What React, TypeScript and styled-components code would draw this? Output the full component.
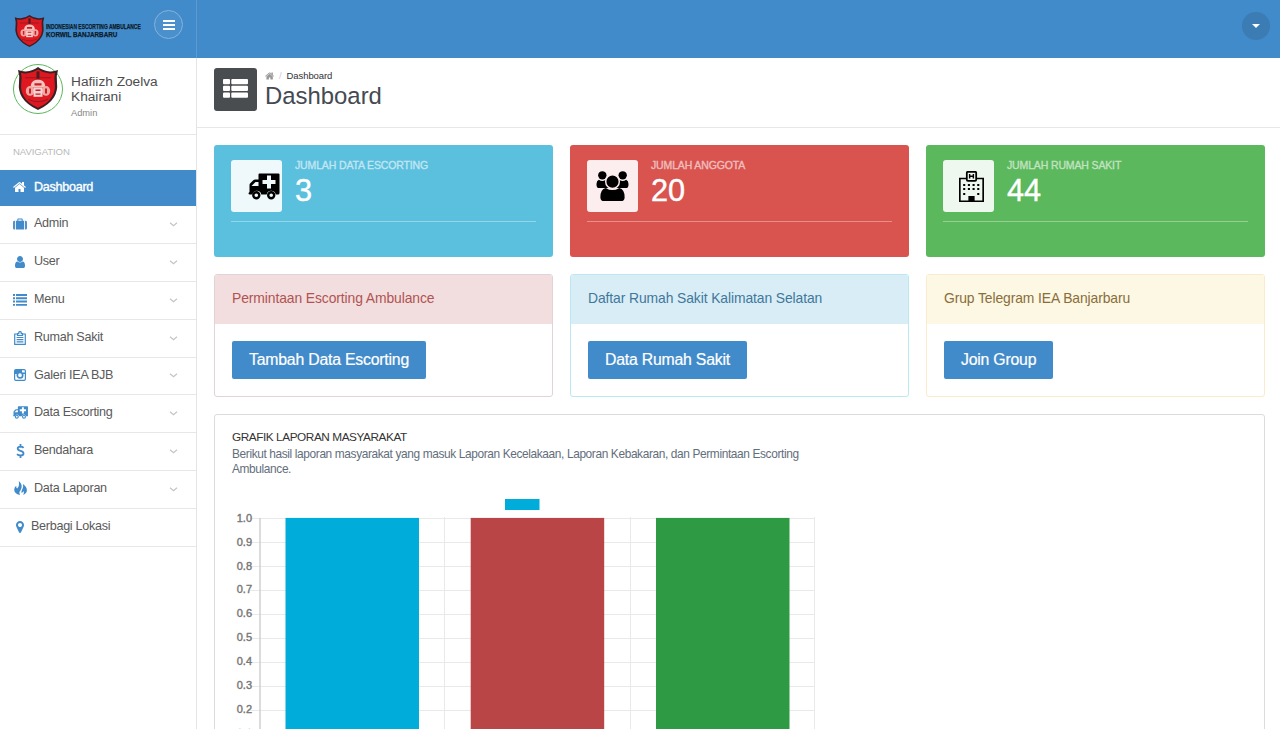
import React from "react";
import styled, { createGlobalStyle } from "styled-components";

const Global = createGlobalStyle`
  *{box-sizing:border-box}
  html,body,#root{margin:0;height:729px}
  body{font-family:"Liberation Sans",Arial,sans-serif;background:#fff;color:#555;overflow:hidden}
  svg{display:block;flex:none}
`;
const Page = styled.div`height:729px;overflow:hidden;`;
const TopBar = styled.header`height:58px;background:#428bca;display:flex;justify-content:space-between;`;
const Brand = styled.div`width:197px;border-right:1px solid #5b9bd1;display:flex;padding:11px 0 0 14px;`;
const BrandLogo = styled.div`margin-top:4px;`;
const BrandText = styled.div`
  width:97px;margin-left:1px;padding-top:12px;line-height:8px;font-weight:700;color:#0c1a28;white-space:nowrap;
  -webkit-text-stroke:.25px #0c1a28;
`;
const BrandLine = styled.div<{ $scale: number; $size: number }>`
  width:95px;font-size:${p => p.$size}px;transform:scaleX(${p => p.$scale});transform-origin:0 0;
`;
const RoundButton = styled.button`
  width:29px;height:29px;margin:-1px 0 0 11px;padding:0;border:1px solid #82b3de;border-radius:50%;
  background:#4a90cd;display:grid;place-items:center;
`;
const UserToggle = styled.button`
  width:28px;height:28px;margin:12px 10px 0 0;padding:0;border:0;border-radius:50%;background:#3b7cb4;display:grid;place-items:center;
`;
const Body = styled.div`display:flex;height:671px;`;
const Sidebar = styled.aside`width:197px;flex:none;border-right:1px solid #e4e4e4;`;
const Profile = styled.div`height:77px;border-bottom:1px solid #e7e7e7;display:flex;padding:6px 0 0 13px;`;
const Avatar = styled.div`
  width:50px;height:50px;border:1px solid #5cb85c;border-radius:50%;display:grid;place-items:center;padding-bottom:2px;
`;
const ProfileText = styled.div`margin:10px 0 0 8px;font-size:13.7px;line-height:15px;color:#4d4d4d;width:100px;`;
const Role = styled.div`font-size:9.3px;line-height:14px;color:#888;margin-top:2px;`;
const NavTitle = styled.div`height:35px;padding:12px 0 0 13px;font-size:9.6px;line-height:10px;color:#b9b9b9;letter-spacing:-.1px;`;
const NavItem = styled.a<{ $active?: boolean; $h: number }>`
  height:${p => p.$h}px;display:flex;align-items:center;padding:0 18px 2px 12px;
  font-size:12.6px;letter-spacing:-.29px;color:${p => (p.$active ? "#fff" : "#5a5a5a")};
  background:${p => (p.$active ? "#428bca" : "#fff")};
  border-bottom:${p => (p.$active ? "0" : "1px solid #e7e7e7")};
  ${p => p.$active && "-webkit-text-stroke:.35px #fff;"}
`;
const NavIcon = styled.span<{ $active?: boolean }>`width:16px;display:grid;place-items:center;color:${p => (p.$active ? "#fff" : "#428bca")};`;
const NavLabel = styled.span<{ $gap?: number }>`flex:1;margin-left:${p => p.$gap ?? 6}px;padding-bottom:1px;`;
const Main = styled.main`flex:1;min-width:0;`;
const PageHead = styled.div`height:70px;border-bottom:1px solid #e7e7e7;display:flex;padding:10px 0 0 17px;`;
const HeadIcon = styled.div`width:43px;height:43px;border-radius:3px;background:#4a4d50;display:grid;place-items:center;padding-bottom:2px;`;
const HeadText = styled.div`margin-left:8px;`;
const Crumbs = styled.div`display:flex;align-items:center;height:15px;font-size:9.5px;color:#333;gap:5px;letter-spacing:-.08px;`;
const CrumbHome = styled.span`color:#999;margin-right:-1px;`;
const Slash = styled.span`color:#ccc;`;
const Title = styled.h1`margin:0;font-size:23.9px;line-height:25px;font-weight:400;color:#444a52;`;
const Content = styled.div`padding:17px 15px 0 17px;`;
const Row = styled.div`display:grid;grid-template-columns:repeat(3,1fr);column-gap:17px;`;
const Stat = styled.section<{ $bg: string }>`height:112px;border-radius:3px;background:${p => p.$bg};padding:15px 17px 0;`;
const StatTop = styled.div`display:flex;height:62px;border-bottom:1px solid rgba(255,255,255,.35);`;
const StatIcon = styled.div<{ $shift?: number }>`
  width:51px;height:52px;border-radius:3px;background:rgba(255,255,255,.9);color:#000;display:flex;align-items:center;
  justify-content:center;padding-left:${p => p.$shift ?? 0}px;
`;
const StatText = styled.div`margin-left:13px;color:#fff;`;
const StatLabel = styled.div`font-size:10.5px;line-height:10px;letter-spacing:-.14px;opacity:.62;-webkit-text-stroke:.3px #fff;`;
const StatNumber = styled.div`font-size:30.7px;line-height:42px;-webkit-text-stroke:.4px #fff;`;
const Card = styled.section<{ $line: string }>`height:123px;margin-top:17px;border:1px solid ${p => p.$line};border-radius:3px;overflow:hidden;`;
const CardHead = styled.div<{ $bg: string; $fg: string }>`
  height:49px;padding:15px 17px;font-size:13.9px;letter-spacing:-.1px;line-height:16px;background:${p => p.$bg};color:${p => p.$fg};
`;
const Button = styled.button`
  height:38px;margin:17px 0 0 17px;padding:0 17px;border:0;border-radius:2px;background:#428bca;color:#fff;
  font:15.8px "Liberation Sans",Arial,sans-serif;letter-spacing:-.2px;-webkit-text-stroke:.2px #fff;white-space:nowrap;
`;
const ChartPanel = styled.section`height:400px;margin-top:17px;border:1px solid #dcdcdc;border-radius:3px;padding:14px 17px;`;
const ChartTitle = styled.h2`margin:0;font-size:11.8px;line-height:16px;font-weight:400;color:#333;letter-spacing:-.44px;`;
const ChartNote = styled.p`margin:2px 0 0;width:584px;font-size:11.9px;line-height:15px;color:#636e7b;letter-spacing:-.375px;`;
const ChartSvg = styled.svg`margin-top:15px;`;
const TickLabel = styled.text`font-size:11px;fill:#777;stroke:#777;stroke-width:.4px;text-anchor:end;`;

const Icon = ({ d, size = 14 }: { d: string; size?: number }) => (
  <svg width={size} height={size} viewBox="0 0 1792 1792" fill="currentColor"><path d={d} /></svg>
);
const homePath = "M1408 992v480q0 26-19 45t-45 19h-384v-384h-256v384h-384q-26 0-45-19t-19-45v-480q0-1 .5-3t.5-3l575-474 575 474q1 2 1 6zm223-69l-62 74q-8 9-21 11h-3q-13 0-21-7l-692-577-692 577q-12 8-24 7-13-2-21-11l-62-74q-8-10-7-23.5t11-21.5l719-599q32-26 76-26t76 26l244 204v-195q0-14 9-23t23-9h192q14 0 23 9t9 23v408l219 182q10 8 11 21.5t-7 23.5z";
const userPath = "M1536 1399q0 109-62.5 187t-150.5 78h-854q-88 0-150.5-78t-62.5-187q0-85 8.5-160.5t31.5-152 58.5-131 94-89 134.5-34.5q131 128 313 128t313-128q76 0 134.5 34.5t94 89 58.5 131 31.5 152 8.5 160.5zm-256-887q0 159-112.5 271.5t-271.5 112.5-271.5-112.5-112.5-271.5 112.5-271.5 271.5-112.5 271.5 112.5 112.5 271.5z";
const pinPath = "M1152 640q0-106-75-181t-181-75-181 75-75 181 75 181 181 75 181-75 75-181zm256 0q0 109-33 179l-364 774q-16 33-47.5 52t-67.5 19-67.5-19-46.5-52l-365-774q-33-70-33-179 0-212 150-362t362-150 362 150 150 362z";

const Suitcase = () => (
  <svg width="14" height="12" viewBox="0 0 15 13" fill="currentColor">
    <path d="M2 3v9.5h-.5A1.5 1.5 0 0 1 0 11V4.500A1.500 1.500 0 0 1 1.500 3zM13 3v9.500h.5A1.500 1.500 0 0 0 15 11V4.500A1.500 1.500 0 0 0 13.500 3z" />
    <path fillRule="evenodd" d="M3 3h1.600V1.300Q4.600.5 5.400.5h4.200q.8 0 .8.800V3H12v9.500H3zM5.700 1.600V3h3.600V1.600z" />
  </svg>
);
const ListIcon = () => (
  <svg width="14" height="12" viewBox="0 0 14 12" fill="currentColor">
    {[0, 3.3, 6.6, 9.9].map(y => <path key={y} d={`M0 ${y}h2v1.900H0zM3 ${y}h11v1.900H3z`} />)}
  </svg>
);
const Clipboard = () => (
  <svg width="12" height="14" viewBox="0 0 12 14" fill="none" stroke="currentColor" strokeWidth="1.200">
    <path d="M3.500 3H.7v10.400h10.600V3H8.500M3.500 4.500V2.600h1.300V1.400q0-.7 1.200-.7t1.200.7v1.200h1.300v1.900zM2.600 6.500h6.800M2.600 8.700h6.800M2.600 10.900h6.800" />
  </svg>
);
const Camera = () => (
  <svg width="12" height="12" viewBox="0 0 12 12" fill="none" stroke="currentColor">
    <rect x=".6" y=".6" width="10.800" height="10.800" rx="1.300" strokeWidth="1.200" />
    <path d="M1 1h7v2.500h3V5H1z" fill="currentColor" stroke="none" />
    <circle cx="6" cy="6.200" r="2.700" fill="#fff" strokeWidth="1.700" />
  </svg>
);
const Ambulance = ({ w = 31, h = 27 }: { w?: number; h?: number }) => (
  <svg width={w} height={h} viewBox="0 0 31 27" fill="currentColor">
    <path fillRule="evenodd" d="M10 1.500Q10 .5 11 .5h19q1 0 1 1V20q0 1.500-1.500 1.500h-2.300a4.600 4.600 0 0 0-9 0h-5.400a4.600 4.600 0 0 0-9 0H1.500Q0 21.500 0 20.500T1 19v-7q0-1 .8-1.800l3-3Q5.800 6.500 6.500 6.500H10zM10 9H7l-4 4h7zM18.500 2.500V7H14v4h4.500v4.500h4V11H27V7h-4.500V2.500z" />
    <circle cx="7.800" cy="22.300" r="3" fill="none" stroke="currentColor" strokeWidth="2.400" />
    <circle cx="22.700" cy="22.300" r="3" fill="none" stroke="currentColor" strokeWidth="2.400" />
  </svg>
);
const Dollar = () => (
  <svg width="9" height="14" viewBox="0 0 9 14" fill="none" stroke="currentColor" strokeWidth="1.800">
    <path d="M7.600 3.800Q6.500 2.600 4.600 2.600 1.700 2.700 1.700 4.500q0 1.600 2.800 2.300 3 .7 3 2.600 0 2-3 2.100-2.200 0-3.500-1.400M4.500 0v2.700M4.500 11.500V14" />
  </svg>
);
const Fire = () => (
  <svg width="13" height="15" viewBox="0 0 13 15" fill="currentColor">
    <path d="M4.700 0q3.600 3.200 2.900 6.500Q7 9 5.800 10.200q-1 1.300.2 3.800Q.2 12.500.2 8.700q0-2.500 2-3.900-.2 2.200.9 2.700Q6 4.500 4.700 0zM9 3q3.900 2.800 3.900 6.300 0 3.200-3.700 4.700 1.400-2.600.3-4-.6 1.600-1.900 2-.6-1.800.6-3.600Q9.600 5.600 9 3z" />
  </svg>
);
const Chevron = () => (
  <svg width="9" height="6" viewBox="0 0 9 6" fill="none" stroke="#c4c4c4" strokeWidth="1.200"><path d="M1 1.700l3.500 3 3.500-3" /></svg>
);
const People = () => (
  <svg width="33" height="32" viewBox="0 0 34 32">
    <circle cx="6.500" cy="5" r="4.300" /><circle cx="27.500" cy="5" r="4.300" />
    <path d="M3 9.500Q6.500 12 10 9.500L14 18H2.500Q.5 18 .5 14 .5 10.500 3 9.500zM31 9.500Q27.500 12 24 9.500L20 18h11.500q2 0 2-4 0-3.500-2.500-4.500z" />
    <path d="M10 18q7 4.500 14 0 5.500 1.500 5.500 9.500 0 4-4 4h-17q-4 0-4-4Q4.500 19.500 10 18z" />
    <circle cx="17" cy="11.500" r="7" stroke="#fbedec" strokeWidth="1.500" />
  </svg>
);
const Hospital = () => (
  <svg width="25" height="31" viewBox="0 0 24 31" preserveAspectRatio="none">
    <path d="M7 7.500H.8v22.700h22.400V7.500H17" fill="none" stroke="#000" strokeWidth="1.600" />
    <rect x="7.500" y=".8" width="9" height="9" rx="1" fill="none" stroke="#000" strokeWidth="1.700" />
    <path d="M10.200 3v4.600M13.800 3v4.600M10.200 5.300h3.600" stroke="#000" strokeWidth="1.400" />
    <path d="M9 25h6v5.500H9z" />
    {[13, 17, 22].map(y => [4, 8.500, 13, 17.500].map((x, i) => (y === 22 && (i === 1 || i === 2) ? null : <rect key={`${x}-${y}`} x={x} y={y} width="2" height="2" />)))}
  </svg>
);
const Shield = ({ w, h }: { w: number; h: number }) => (
  <svg width={w} height={h} viewBox="0 0 42 44" preserveAspectRatio="none">
    <path d="M21 0Q26 4 33 4.500q4 .2 8-1.500-2 6-1 13 1 8-3 15-5 8-16 13Q10 39 5 31q-4-7-3-15 1-7-1-13 4 1.700 8 1.500Q16 4 21 0z" fill="#3a2024" />
    <path d="M21 2.500Q27 6.500 33 6.700q2.500 0 5-.7-1 5-.3 10 1 8-2.500 14Q31 37.500 21 41.800 11 37.500 6.800 30 3.300 24 4.300 16 5 11 4 6q2.500.7 5 .7Q15 6.500 21 2.500z" fill="#df1720" />
    <path d="M8 11h26M11 33q10 5 20 0" stroke="#8f1d20" fill="none" />
    <path d="M19.500 4.500h3V12h-3z" fill="#4c1c20" />
    <path d="M14 18q1-5 7-5t7 5l.5 3h-15z" fill="#f3c4c0" />
    <ellipse cx="13" cy="24.500" rx="4.200" ry="5" fill="#efa8a3" />
    <ellipse cx="29" cy="24.500" rx="4.200" ry="5" fill="#efa8a3" />
    <path d="M16.500 21h9v9.500h-9z" fill="#f6d5d2" />
    <path d="M17.500 16.500h7V19h-7zM12 22h2v5h-2zM28 22h2v5h-2zM18.500 23h5v1.500h-5zM18.500 27h5v1.500h-5z" fill="#cf1c22" />
  </svg>
);

const nav: { label: string; icon: React.ReactNode; h: number; leaf?: boolean; active?: boolean }[] = [
  { label: "Dashboard", icon: <Icon d={homePath} />, h: 36, leaf: true, active: true },
  { label: "Admin", icon: <Suitcase />, h: 38 },
  { label: "User", icon: <Icon d={userPath} size={14} />, h: 38 },
  { label: "Menu", icon: <ListIcon />, h: 38 },
  { label: "Rumah Sakit", icon: <Clipboard />, h: 38 },
  { label: "Galeri IEA BJB", icon: <Camera />, h: 37 },
  { label: "Data Escorting", icon: <Ambulance w={15} h={13} />, h: 38 },
  { label: "Bendahara", icon: <Dollar />, h: 38 },
  { label: "Data Laporan", icon: <Fire />, h: 38 },
  { label: "Berbagi Lokasi", icon: <Icon d={pinPath} />, h: 38, leaf: true },
];
const stats = [
  { label: "JUMLAH DATA ESCORTING", n: 3, bg: "#5bc0de", icon: <Ambulance w={32} />, shift: 15 },
  { label: "JUMLAH ANGGOTA", n: 20, bg: "#d9534f", icon: <People /> },
  { label: "JUMLAH RUMAH SAKIT", n: 44, bg: "#5cb85c", icon: <Hospital />, shift: 6 },
];
const cards = [
  { title: "Permintaan Escorting Ambulance", action: "Tambah Data Escorting", bg: "#f2dede", fg: "#b05352", line: "#e3d3d6" },
  { title: "Daftar Rumah Sakit Kalimatan Selatan", action: "Data Rumah Sakit", bg: "#d9edf7", fg: "#3f789a", line: "#bce8f1" },
  { title: "Grup Telegram IEA Banjarbaru", action: "Join Group", bg: "#fcf8e3", fg: "#8a6d3b", line: "#faebcc" },
];
const ticks = ["1.0", "0.9", "0.8", "0.7", "0.6", "0.5", "0.4", "0.3", "0.2", "0.1"];
const bars = [{ x: 53.500, c: "#00acda" }, { x: 238.700, c: "#ba4547" }, { x: 424, c: "#2e9a43" }];

const BarChart = () => (
  <ChartSvg width="600" height="280" viewBox="0 0 600 280">
    <rect x="273" y="7" width="34.500" height="11" fill="#00acda" />
    {ticks.map((t, i) => (
      <g key={t}>
        <path d={`M18 ${Math.round(25.6 + i * 24) + .5}H583`} stroke="#e9e9e9" />
        <TickLabel x="20" y={29.700 + i * 23.900}>{t}</TickLabel>
      </g>
    ))}
    {[212.500, 398.500, 582.500].map(x => <path key={x} d={`M${x} 25V280`} stroke="#e9e9e9" />)}
    <path d="M28 26V280" stroke="#c9c9c9" strokeWidth="1.300" />
    {bars.map(b => <rect key={b.c} x={b.x} y="25.900" width="133.500" height="260" fill={b.c} />)}
  </ChartSvg>
);

export default function App() {
  return (
    <Page>
      <Global />
      <TopBar>
        <Brand>
          <BrandLogo><Shield w={31} h={32} /></BrandLogo>
          <BrandText>
            <BrandLine $scale={0.61} $size={8.1}>INDONESIAN ESCORTING AMBULANCE</BrandLine>
            <BrandLine $scale={0.86} $size={7.3}>KORWIL BANJARBARU</BrandLine>
          </BrandText>
          <RoundButton>
            <svg width="12" height="10" viewBox="0 0 12 10" fill="#fff"><path d="M0 0h12v2H0zM0 4h12v2H0zM0 8h12v2H0z" /></svg>
          </RoundButton>
        </Brand>
        <UserToggle><svg width="8" height="4" viewBox="0 0 8 4" fill="#fff"><path d="M0 0h8L4 4z" /></svg></UserToggle>
      </TopBar>
      <Body>
        <Sidebar>
          <Profile>
            <Avatar><Shield w={42} h={43} /></Avatar>
            <ProfileText>Hafiizh Zoelva Khairani<Role>Admin</Role></ProfileText>
          </Profile>
          <NavTitle>NAVIGATION</NavTitle>
          {nav.map(n => (
            <NavItem key={n.label} $active={n.active} $h={n.h}>
              <NavIcon $active={n.active}>{n.icon}</NavIcon>
              <NavLabel $gap={n.label === "Berbagi Lokasi" ? 3 : 6}>{n.label}</NavLabel>
              {!n.leaf && <Chevron />}
            </NavItem>
          ))}
        </Sidebar>
        <Main>
          <PageHead>
            <HeadIcon>
              <svg width="25" height="19" viewBox="0 0 25 19" fill="#fff">
                {[0, 6.8, 13.6].map(y => (
                  <g key={y}><rect y={y} width="7" height="5.200" rx="1" /><rect x="8.300" y={y} width="16.700" height="5.200" rx="1" /></g>
                ))}
              </svg>
            </HeadIcon>
            <HeadText>
              <Crumbs><CrumbHome><Icon d={homePath} size={10} /></CrumbHome><Slash>/</Slash>Dashboard</Crumbs>
              <Title>Dashboard</Title>
            </HeadText>
          </PageHead>
          <Content>
            <Row>
              {stats.map(s => (
                <Stat key={s.label} $bg={s.bg}>
                  <StatTop>
                    <StatIcon $shift={s.shift}>{s.icon}</StatIcon>
                    <StatText><StatLabel>{s.label}</StatLabel><StatNumber>{s.n}</StatNumber></StatText>
                  </StatTop>
                </Stat>
              ))}
            </Row>
            <Row>
              {cards.map(c => (
                <Card key={c.title} $line={c.line}>
                  <CardHead $bg={c.bg} $fg={c.fg}>{c.title}</CardHead>
                  <Button>{c.action}</Button>
                </Card>
              ))}
            </Row>
            <ChartPanel>
              <ChartTitle>GRAFIK LAPORAN MASYARAKAT</ChartTitle>
              <ChartNote>
                Berikut hasil laporan masyarakat yang masuk Laporan Kecelakaan, Laporan Kebakaran, dan Permintaan Escorting Ambulance.
              </ChartNote>
              <BarChart />
            </ChartPanel>
          </Content>
        </Main>
      </Body>
    </Page>
  );
}
